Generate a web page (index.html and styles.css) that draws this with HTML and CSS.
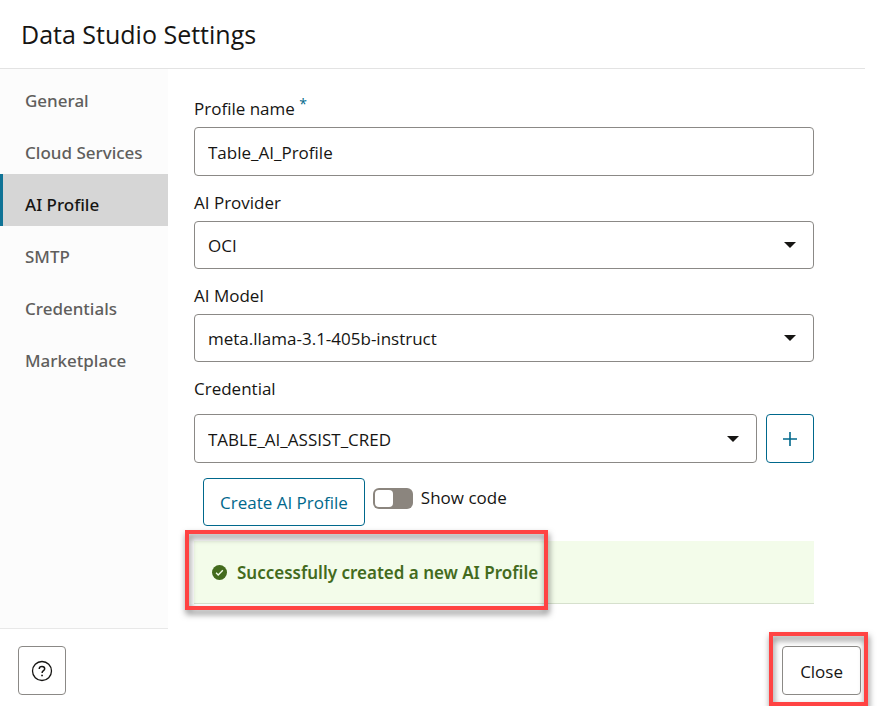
FILE: index.html
```html
<!DOCTYPE html>
<html lang="en">
<head>
<meta charset="utf-8">
<meta name="viewport" content="width=device-width, initial-scale=1">
<title>Data Studio Settings</title>
<link rel="stylesheet" href="styles.css">
</head>
<body>
<div class="dialog">
  <header class="header"><h1 class="title">Data Studio Settings</h1></header>
  <div class="main">
    <nav class="sidebar">
      <a class="nav-item" href="#general">General</a>
      <a class="nav-item" href="#cloud">Cloud Services</a>
      <a class="nav-item active" href="#ai" aria-current="page">AI Profile</a>
      <a class="nav-item" href="#smtp">SMTP</a>
      <a class="nav-item" href="#credentials">Credentials</a>
      <a class="nav-item" href="#marketplace">Marketplace</a>
    </nav>
    <main class="content">
      <div class="field">
        <label class="label" for="name">Profile name <span class="required">*</span></label>
        <input class="control" id="name" type="text" value="Table_AI_Profile">
      </div>
      <div class="field">
        <label class="label" for="provider">AI Provider</label>
        <select class="control select" id="provider"><option>OCI</option></select>
      </div>
      <div class="field">
        <label class="label" for="model">AI Model</label>
        <select class="control select" id="model"><option>meta.llama-3.1-405b-instruct</option></select>
      </div>
      <div class="field field-spaced">
        <label class="label" for="credential">Credential</label>
        <div class="credential-row">
          <select class="control select" id="credential"><option>TABLE_AI_ASSIST_CRED</option></select>
          <button class="button accent icon-button" type="button" aria-label="Add credential">
            <svg width="16" height="16" viewBox="0 0 16 16" fill="none" stroke="currentColor" stroke-width="1.6"><path d="M8 1v14M1 8h14"/></svg>
          </button>
        </div>
      </div>
      <div class="actions">
        <button class="button accent" type="button">Create AI Profile</button>
        <div class="toggle">
          <input class="switch" id="code" type="checkbox" role="switch">
          <label for="code">Show code</label>
        </div>
      </div>
      <div class="alert" role="status">
        <div class="alert-message">
          <svg class="alert-icon" width="15" height="15" viewBox="0 0 14 14"><circle cx="7" cy="7" r="7" fill="currentColor"/><path d="M3.800 7.300l2 2 4.300-4.300" fill="none" stroke="#f3fcea" stroke-width="1.3"/></svg>
          <strong class="alert-text">Successfully created a new AI Profile</strong>
          <span class="highlight highlight-alert"></span>
        </div>
      </div>
    </main>
  </div>
  <footer class="footer">
    <button class="button icon-button" type="button" aria-label="Help">
      <svg width="22" height="22" viewBox="0 0 22 22" fill="none" stroke="currentColor" stroke-width="1.3"><circle cx="11" cy="11" r="9.500"/><path d="M8.300 9V8.600C8.300 7.200 9.400 6.400 11 6.400s2.700.9 2.700 2.300c0 2-2.600 1.900-2.600 4.200" stroke-width="1.500"/><path d="M10.200 15.500h1.700" stroke-width="1.700"/></svg>
    </button>
    <div class="close-wrap">
      <button class="button close" type="button">Close</button>
      <span class="highlight highlight-close"></span>
    </div>
  </footer>
</div>
</body>
</html>
```
FILE: styles.css
```css
* { box-sizing: border-box; }

body {
  margin: 0;
  background: #fff;
  color: #161513;
  font: 17px/26px "Open Sans", "Noto Sans", sans-serif;
}

button, input, select { font: inherit; color: inherit; }

.dialog {
  display: flex;
  flex-direction: column;
  min-height: 100vh;
  overflow: clip;
}

.header {
  margin-right: 12px;
  padding: 17px 21px;
  border-bottom: 1px solid #e3e3e3;
}

.title { margin: 0; font-size: 25px; line-height: 34px; font-weight: 400; }

.main { display: flex; flex: 1; }

.sidebar {
  flex: 0 0 168px;
  padding-top: 1px;
  background: #fcfcfc;
  border-bottom: 1px solid #e8e8e8;
}

.nav-item {
  display: block;
  height: 52px;
  padding: 18px 0 8px 22px;
  border-left: 3px solid transparent;
  color: #605e5c;
  font-family: "Noto Sans", sans-serif;
  font-weight: 500;
  text-decoration: none;
}

.nav-item.active { background: #d6d6d6; border-color: #0f7396; color: #161513; }

.content { flex: 1; min-width: 0; padding: 27px 63px 24px 26px; }

.field { display: flex; flex-direction: column; gap: 5px; margin-bottom: 14px; }
.field-spaced { gap: 12px; margin-bottom: 15px; }

.required { color: #00688c; font-size: 14px; line-height: 1; vertical-align: 6px; }

.control {
  width: 100%;
  height: 48px;
  padding: 2px 13px 0;
  border: 1px solid #8b8986;
  border-radius: 4px;
  background: #fff;
}

input.control { height: 49px; }

.select {
  appearance: none;
  background: #fff url("data:image/svg+xml,%3Csvg xmlns='http://www.w3.org/2000/svg' width='12' height='6'%3E%3Cpath d='M0 0h12L6 6z' fill='%23161513'/%3E%3C/svg%3E") no-repeat right 17px center;
}

.credential-row { display: flex; gap: 9px; }
.credential-row .control { flex: 1; min-width: 0; height: 49px; }

.button {
  height: 48px;
  padding: 2px 16px 0;
  border: 1px solid #8b8986;
  border-radius: 4px;
  background: #fff;
}

.accent { border-color: #00688c; color: #00688c; }

.icon-button {
  display: flex;
  align-items: center;
  justify-content: center;
  width: 48px;
  height: 49px;
  padding: 0;
}

.actions { display: flex; gap: 8px; padding-left: 9px; margin-bottom: 15px; }

.toggle { display: flex; align-items: center; gap: 8px; height: 40px; }

.switch {
  appearance: none;
  width: 40px;
  height: 21px;
  margin: 0;
  padding: 2px;
  border-radius: 6px;
  background: #8b857e;
}

.switch::before {
  content: "";
  display: block;
  width: 18px;
  height: 17px;
  border-radius: 4px;
  background: #fff;
}

.alert {
  display: flex;
  height: 63px;
  background: #f3fcea;
  border-bottom: 1px solid #d6e0cd;
  color: #436b1d;
}

.alert-message { position: relative; display: flex; align-items: center; gap: 10px; padding: 1px 9px 0 18px; }
.alert-icon { flex: none; }
.alert-text { font-family: "Noto Sans", sans-serif; font-weight: 600; }

.highlight {
  position: absolute;
  border: 4px solid #ff4343;
  filter: drop-shadow(1px 4px 3px rgb(0 0 0 / 50%));
  pointer-events: none;
}

.highlight-alert { inset: -11px -1px -7px -9px; }
.highlight-close { inset: -14px -7px -11px -13px; }

.footer {
  display: flex;
  justify-content: space-between;
  padding: 17px 16px 11px 18px;
}

.close-wrap { position: relative; }
.close { height: 49px; padding: 2px 17px 0; }
```
